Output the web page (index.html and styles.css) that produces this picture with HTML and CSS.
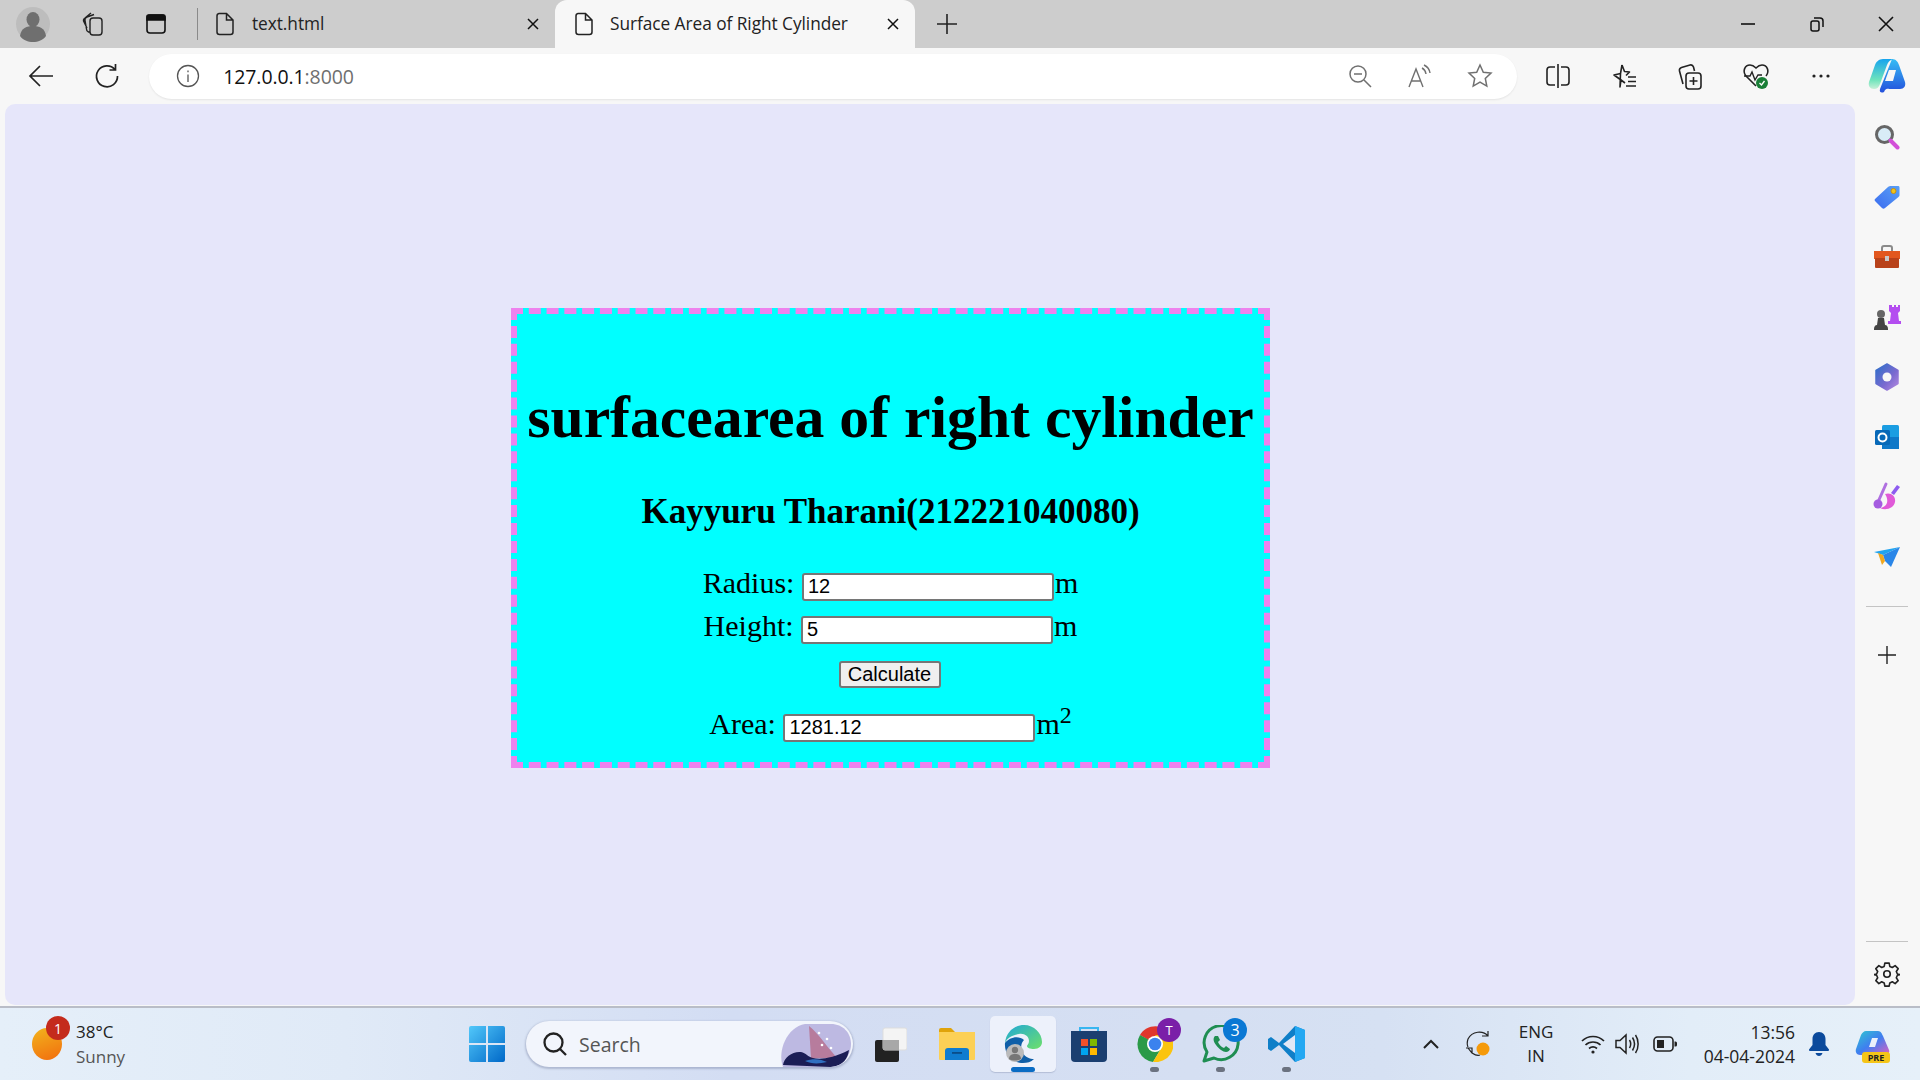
FILE: index.html
```html
<!DOCTYPE html>
<html lang="en">
<head>
    <meta charset="utf-8">
    <title>Surface Area of Right Cylinder</title>
    <link rel="stylesheet" href="styles.css">
</head>
<body>
<!-- tab strip -->
<div class="strip">
    <span class="s-avatar">
        <svg width="36" height="36" viewBox="0 0 36 36"><circle cx="18" cy="18" r="17" fill="#bdbdbd"/><ellipse cx="18" cy="13.5" rx="6.5" ry="7.5" fill="#6f6f6f"/><path d="M5 30c1-8 7-10 13-10s12 2 13 10c-3 4-8 6-13 6s-10-2-13-6z" fill="#6f6f6f"/></svg>
    </span>
    <span class="s-coll">
        <svg width="26" height="26" viewBox="0 0 26 26" fill="none" stroke="#222" stroke-width="1.4"><rect x="10" y="7" width="12" height="17" rx="3"/><path d="M10 21H8.500a3 3 0 0 1-2-3L5 9.500a3 3 0 0 1 2-3.500L14 3.500M7 17 4 11a3 3 0 0 1 1-4l6-5"/></svg>
    </span>
    <span class="s-tabs">
        <svg width="24" height="24" viewBox="0 0 24 24" fill="none" stroke="#111" stroke-width="1.6"><rect x="3" y="3" width="18" height="18" rx="3"/><path d="M3 4.500a1.500 1.500 0 0 1 1.500-1.500h15a1.500 1.500 0 0 1 1.500 1.500V8H3z" fill="#111"/></svg>
    </span>
    <div class="tab">
        <svg class="doc" width="20" height="24" viewBox="0 0 20 24" fill="none" stroke="#222" stroke-width="1.5"><path d="M4 1.500h7.500L18 8v12a2.500 2.500 0 0 1-2.500 2.500h-11A2.500 2.500 0 0 1 2 20V4a2.500 2.500 0 0 1 2-2.500zM11.500 1.500V8H18"/></svg>
        <span class="tab-title">text.html</span>
        <svg class="tab-x" width="12" height="12" viewBox="0 0 12 12" stroke="#111" stroke-width="1.5"><path d="M1 1l10 10M11 1L1 11"/></svg>
    </div>
    <div class="tab tab-on">
        <svg class="doc" width="20" height="24" viewBox="0 0 20 24" fill="none" stroke="#222" stroke-width="1.5"><path d="M4 1.500h7.500L18 8v12a2.500 2.500 0 0 1-2.500 2.500h-11A2.500 2.500 0 0 1 2 20V4a2.500 2.500 0 0 1 2-2.500zM11.500 1.500V8H18"/></svg>
        <span class="tab-title">Surface Area of Right Cylinder</span>
        <svg class="tab-x" width="12" height="12" viewBox="0 0 12 12" stroke="#111" stroke-width="1.5"><path d="M1 1l10 10M11 1L1 11"/></svg>
    </div>
    <span class="s-new">
        <svg width="22" height="22" viewBox="0 0 22 22" stroke="#222" stroke-width="1.6"><path d="M11 1v20M1 11h20"/></svg>
    </span>
    <span class="fill"></span>
    <span class="win">
        <svg width="14" height="14" viewBox="0 0 14 14" stroke="#111" stroke-width="1.6"><path d="M0 7h14"/></svg>
    </span>
    <span class="win">
        <svg width="16" height="16" viewBox="0 0 16 16" fill="none" stroke="#111" stroke-width="1.5"><rect x="2" y="5" width="8" height="10" rx="2"/><path d="M5 2h6a3 3 0 0 1 3 3v6"/></svg>
    </span>
    <span class="win">
        <svg width="16" height="16" viewBox="0 0 16 16" stroke="#111" stroke-width="1.6"><path d="M1 1l14 14M15 1L1 15"/></svg>
    </span>
</div>

<!-- address bar -->
<div class="toolbar">
    <span class="t-back">
        <svg width="26" height="24" viewBox="0 0 26 24" fill="none" stroke="#222" stroke-width="1.7"><path d="M25 12H2M12 2 2 12l10 10"/></svg>
    </span>
    <span class="t-reload">
        <svg width="26" height="26" viewBox="0 0 26 26" fill="none" stroke="#222" stroke-width="1.7"><path d="M21 6.500A10.500 10.500 0 1 0 23.500 13M21.500 1v6h-6"/></svg>
    </span>
    <div class="address">
        <svg class="info" width="24" height="24" viewBox="0 0 24 24" fill="none" stroke="#555" stroke-width="1.3"><circle cx="12" cy="12" r="10.500"/><path d="M12 10.500V18M12 6.500v1.800"/></svg>
        <span class="url">127.0.0.1<span class="url-port">:8000</span></span>
        <span class="fill"></span>
        <span class="a-icon">
            <svg width="24" height="24" viewBox="0 0 24 24" fill="none" stroke="#707070" stroke-width="1.5"><circle cx="10" cy="10" r="8"/><path d="M6 10h8M16 16l7 7"/></svg>
        </span>
        <span class="a-icon">
            <svg width="26" height="24" viewBox="0 0 26 24" fill="none" stroke="#707070" stroke-width="1.4"><path d="M2 23 9 5l7 18M4.500 17h9.500M15 4c2 1 3.500 3 4 6M17 1c3 1.500 5.500 4 6 8"/></svg>
        </span>
        <span class="a-icon">
            <svg width="26" height="26" viewBox="0 0 26 26" fill="none" stroke="#707070" stroke-width="1.5"><path d="M13 2l3.300 7.200 7.700.9-5.700 5.300 1.500 7.700-6.800-3.900-6.800 3.900 1.500-7.700L2 10.100l7.700-.9z"/></svg>
        </span>
    </div>
    <div class="t-right">
        <span class="t-slot">
            <svg width="24" height="26" viewBox="0 0 24 26" fill="none" stroke="#222" stroke-width="1.6"><path d="M12 1v24M9 4H4a3 3 0 0 0-3 3v12a3 3 0 0 0 3 3h5M15 4h5a3 3 0 0 1 3 3v12a3 3 0 0 1-3 3h-5"/></svg>
        </span>
        <span class="t-slot">
            <svg width="26" height="26" viewBox="0 0 26 26" fill="none" stroke="#222" stroke-width="1.6" stroke-linejoin="round"><path d="M11 2l2.500 6.500 5 .5-3.500 3.500M9 24l1-7-7-5 6.500-1.500zM11 2 9.500 10.500M10 17l4 3M17 14h8M17 18.500h8M15 23h10"/></svg>
        </span>
        <span class="t-slot">
            <svg width="26" height="28" viewBox="0 0 26 28" fill="none" stroke="#222" stroke-width="1.6"><rect x="9" y="11" width="15" height="16" rx="3"/><path d="M16.500 15v8M12.500 19h8M6 22 2.500 9a3 3 0 0 1 2-3.500L13 3a3 3 0 0 1 3.500 2l1 4"/></svg>
        </span>
        <span class="t-slot">
            <svg width="28" height="28" viewBox="0 0 28 28"><path d="M14 24 4 14C0 9 3 3 8 3c3 0 5 2 6 3 1-1 3-3 6-3 5 0 8 6 4 11" fill="none" stroke="#222" stroke-width="1.6"/><path d="M2 14h6l2-4 3 8 3-5h4" fill="none" stroke="#222" stroke-width="1.4"/><circle cx="20" cy="21" r="6" fill="#1a7f37"/><path d="M17.500 21l2 2 3-4" fill="none" stroke="#fff" stroke-width="1.300"/></svg>
        </span>
        <span class="t-slot">
            <svg width="20" height="4" viewBox="0 0 20 4" fill="#222"><circle cx="3" cy="2" r="1.600"/><circle cx="10" cy="2" r="1.600"/><circle cx="17" cy="2" r="1.600"/></svg>
        </span>
        <span class="t-slot">
            <svg width="38" height="36" viewBox="0 0 38 36"><defs><linearGradient id="cpa" x1="0" y1="0" x2="0" y2="1"><stop offset="0" stop-color="#16a4ee"/><stop offset=".7" stop-color="#6fe4bc"/><stop offset="1" stop-color="#c8f0d8"/></linearGradient><linearGradient id="cpb" x1="0" y1="0" x2="0" y2="1"><stop offset="0" stop-color="#35bdf5"/><stop offset="1" stop-color="#2450dc"/></linearGradient></defs><path d="M24 1c4 0 6 3 7 6l6 17c1 4-1 7-5 7h-8c-4 0-5-1-7 1l-1 2c-2 1-5 1-4-3z" fill="url(#cpb)"/><path d="M15 1h10c-3 1-5 3-6 6l-7 19c-1 3-3 5-6 5-4 0-6-3-5-7L7 7c1-3 4-6 8-6z" fill="url(#cpa)"/><path d="M21 12h7l-3 11h-8z" fill="#f7f7f7"/></svg>
        </span>
    </div>
</div>

<div class="main">
    <div class="page">
        <div class="card">
            <h1>surfacearea of right cylinder</h1>
            <h2>Kayyuru Tharani(212221040080)</h2>
            <form class="calc">
                <div class="row row-radius">Radius: <input class="num" type="text" value="12">m</div>
                <div class="row row-height">Height: <input class="num" type="text" value="5">m</div>
                <div class="row row-btn"><input class="calc-btn" type="button" value="Calculate"></div>
                <div class="row row-area">Area: <input class="num" type="text" value="1281.12">m<sup>2</sup></div>
            </form>
        </div>
    </div>

    <!-- edge sidebar -->
    <div class="sidebar">
        <span class="side-slot">
            <svg width="26" height="26" viewBox="0 0 26 26"><circle cx="10.500" cy="10.500" r="8" fill="#d9ecf7" stroke="#666" stroke-width="3"/><path d="M16.500 16.500l7 7" stroke="#d24fd8" stroke-width="4" stroke-linecap="round"/></svg>
        </span>
        <span class="side-slot">
            <svg width="26" height="26" viewBox="0 0 26 26"><defs><linearGradient id="sb1" x1="0" y1="1" x2="1" y2="0"><stop offset="0" stop-color="#3b6cf0"/><stop offset="1" stop-color="#5aa0f5"/></linearGradient></defs><path d="M1 15 14 3c1-1 2-1 3-1h7c1 0 1.500.5 1.500 1.500V11c0 1-.5 1.500-1 2L11 24c-1 1-2 1-3 0l-7-7c-.5-.5-.5-1.500 0-2z" fill="url(#sb1)"/><circle cx="19.500" cy="7" r="2.500" fill="#f0c419" stroke="#c88f10"/></svg>
        </span>
        <span class="side-slot">
            <svg width="28" height="24" viewBox="0 0 28 24"><path d="M9 6V3a2 2 0 0 1 2-2h6a2 2 0 0 1 2 2v3" fill="none" stroke="#8a8a8a" stroke-width="2"/><rect x="1" y="6" width="26" height="8" fill="#e2571e"/><rect x="2" y="13" width="24" height="10" rx="1" fill="#b8421a"/><rect x="12" y="11" width="4" height="5" fill="#c9c9c9"/></svg>
        </span>
        <span class="side-slot">
            <svg width="28" height="28" viewBox="0 0 28 28"><path d="M16 2h3v2h2V2h2v2h2V2h2v6l-2 2 1 8h2v3H15v-3h2l1-8-2-2z" fill="#b44df0"/><circle cx="8" cy="11" r="4" fill="#666"/><path d="M5 15h6l1 7H4zM1 26c0-2 1-4 3-4h8c2 0 3 2 3 4v1H1z" fill="#444"/></svg>
        </span>
        <span class="side-slot">
            <svg width="26" height="28" viewBox="0 0 26 28"><defs><linearGradient id="m3" x1="0" y1="0" x2="1" y2="1"><stop offset="0" stop-color="#2a6fc9"/><stop offset=".6" stop-color="#7b6ad0"/><stop offset="1" stop-color="#b58ae0"/></linearGradient></defs><path d="M13 1l11 6.500v13L13 27 2 20.500v-13z" fill="url(#m3)" stroke="url(#m3)" stroke-width="1.500" stroke-linejoin="round"/><circle cx="13" cy="14" r="4.500" fill="#f7f7f7"/></svg>
        </span>
        <span class="side-slot">
            <svg width="26" height="26" viewBox="0 0 26 26"><rect x="8" y="1" width="17" height="24" rx="1.500" fill="#1b9de2"/><path d="M8 13h17v12H8z" fill="#0f78c8"/><rect x="1" y="6" width="15" height="15" rx="1.500" fill="#0769b8"/><circle cx="8.500" cy="13.500" r="4" fill="none" stroke="#fff" stroke-width="2"/></svg>
        </span>
        <span class="side-slot">
            <svg width="28" height="30" viewBox="0 0 28 30"><path d="M12 12c6-2 11 2 10 8-1 6-9 9-15 6 6-1 10-6 5-14z" fill="#e05ad8"/><path d="M13 2 5 20" stroke="#b070e0" stroke-width="3" stroke-linecap="round"/><circle cx="5" cy="22" r="4.500" fill="#a55ce0"/><path d="M18 11l6-8 3 2-6 8z" fill="#8d5cf0"/></svg>
        </span>
        <span class="side-slot">
            <svg width="28" height="22" viewBox="0 0 28 22"><path d="M1 6 27 1 10 9z" fill="#20a4f0"/><path d="M10 9 27 1l-9 20-6-6z" fill="#2a86e8"/><path d="M5 7l5 2 2 6-3 4z" fill="#f0a820"/></svg>
        </span>
        <span class="side-line side-line-top"></span>
        <span class="side-slot">
            <svg width="20" height="20" viewBox="0 0 20 20" stroke="#222" stroke-width="1.400"><path d="M10 1v18M1 10h18"/></svg>
        </span>
        <span class="fill"></span>
        <span class="side-line"></span>
        <span class="side-gear">
            <svg width="26" height="26" viewBox="0 0 24 24" fill="none" stroke="#222" stroke-width="1.500" stroke-linejoin="round"><circle cx="12" cy="12" r="3"/><path d="M10 2h4l.6 3 2.300 1 2.600-1.700 2.800 2.800-1.700 2.600 1 2.300 3 .6v0l-3 .6-1 2.300 1.700 2.600-2.800 2.800-2.600-1.700-2.300 1-.6 3h-4l-.6-3-2.300-1-2.600 1.700-2.800-2.800 1.700-2.600-1-2.300-3-.6v-0l3-.6 1-2.300-1.700-2.600 2.800-2.800 2.600 1.700 2.300-1z"/></svg>
        </span>
    </div>
</div>

<!-- windows taskbar -->
<div class="taskbar">
    <div class="weather">
        <span class="sun"><span class="sun-badge">1</span></span>
        <div class="weather-text">
            <div class="temp">38°C</div>
            <div class="sky">Sunny</div>
        </div>
    </div>
    <span class="tb-start">
        <svg width="36" height="36" viewBox="0 0 36 36"><defs><linearGradient id="wn" x1="0" y1="0" x2="1" y2="1"><stop offset="0" stop-color="#52c8fa"/><stop offset="1" stop-color="#0068c8"/></linearGradient></defs><path d="M0 2a2 2 0 0 1 2-2h15v17H0zM19 0h15a2 2 0 0 1 2 2v15H19zM0 19h17v17H2a2 2 0 0 1-2-2zM19 19h17v15a2 2 0 0 1-2 2H19z" fill="url(#wn)"/></svg>
    </span>
    <div class="search">
        <svg width="26" height="26" viewBox="0 0 26 26" fill="none" stroke="#222" stroke-width="2.300"><circle cx="11.500" cy="11.500" r="9"/><path d="M18 18l6 6"/></svg>
        <span class="search-text">Search</span>
        <svg class="search-art" width="78" height="46" viewBox="0 0 78 46"><path d="M30 3h26c12 0 20 9 20 20s-8 23-20 23H8C2 30 12 6 30 3z" fill="#bdb9e2"/><path d="M34 5c10 8 14 16 28 32H36z" fill="#b45a78" opacity=".65"/><path d="M8 44c1-8 10-14 18-13 5 1 7 5 12 6 8 2 20 0 36-8-1 8-6 16-18 17z" fill="#1b1d55"/><path d="M30 40c8-3 16-2 22 1-8 2-16 2-22-1z" fill="#2f6fc0"/><circle cx="44" cy="12" r="1.300" fill="#fff"/><circle cx="52" cy="18" r="1.300" fill="#fff"/><circle cx="47" cy="24" r="1.300" fill="#fff"/><circle cx="56" cy="27" r="1.300" fill="#fff"/></svg>
    </div>
    <div class="apps">
        <span class="app">
            <svg width="32" height="36" viewBox="0 0 32 36"><rect x="0" y="14" width="24" height="22" rx="2" fill="#222"/><rect x="8" y="2" width="24" height="22" rx="2" fill="#f4f4f4" stroke="#ddd"/><rect x="8" y="14" width="16" height="10" fill="#a8a8a8"/></svg>
        </span>
        <span class="app">
            <svg width="36" height="34" viewBox="0 0 36 34"><path d="M0 3a2 2 0 0 1 2-2h10l4 4H0z" fill="#e0a30a"/><path d="M0 5h36v27a1 1 0 0 1-1 1H1a1 1 0 0 1-1-1z" fill="#fcd056"/><path d="M6 33v-9a3 3 0 0 1 3-3h18a3 3 0 0 1 3 3v9z" fill="#0f7ccf"/><rect x="13" y="25" width="10" height="1.800" fill="#0a4d88"/></svg>
        </span>
        <span class="app app-on">
            <svg width="38" height="38" viewBox="0 0 38 38"><defs><linearGradient id="eg" x1="0" y1="0" x2="1" y2="1"><stop offset="0" stop-color="#1fa8d8"/><stop offset="1" stop-color="#6ee06a"/></linearGradient></defs><path d="M1 18C2 7 10 0 20 0c10 0 18 8 18 17 0 4-3 7-8 7-4 0-7-1-7-3 0-1 2-2 2-5 0-5-5-8-10-7C8 10 3 13 1 18z" fill="url(#eg)"/><path d="M1 18c4-6 14-8 19-3 -3 3-4 8-1 13 2 4 7 6 11 6-3 3-7 4-11 4C8 38 0 29 1 18z" fill="#0f5fa8"/><circle cx="11" cy="28" r="9" fill="#bbb"/><circle cx="11" cy="25" r="3.200" fill="#777"/><path d="M5 34c0-4 3-5 6-5s6 1 6 5c-3 2-9 2-12 0z" fill="#777"/></svg>
        </span>
        <span class="app">
            <svg width="36" height="36" viewBox="0 0 36 36"><path d="M9 7V2h18v5" fill="none" stroke="#38b6f0" stroke-width="2"/><path d="M0 5h36v27a4 4 0 0 1-4 4H4a4 4 0 0 1-4-4z" fill="#1b3f70"/><rect x="10" y="13" width="7" height="7" fill="#f0502a"/><rect x="19" y="13" width="7" height="7" fill="#80b800"/><rect x="10" y="22" width="7" height="7" fill="#00a4ef"/><rect x="19" y="22" width="7" height="7" fill="#ffb800"/></svg>
        </span>
        <span class="app">
            <svg width="36" height="36" viewBox="0 0 36 36"><path d="M18 18 34 9a18 18 0 0 0-31 0z" fill="#e0362c"/><path d="M3 9a18 18 0 0 0 13 27l9-15z" fill="#2a9a48"/><path d="M34 9H18l7 12-9 15A18 18 0 0 0 34 9z" fill="#fbc40e"/><circle cx="18" cy="18" r="8" fill="#fff"/><circle cx="18" cy="18" r="6.300" fill="#3b82ee"/></svg>
            <span class="app-badge app-badge-t">T</span>
            <i class="app-dot"></i>
        </span>
        <span class="app">
            <svg width="38" height="38" viewBox="0 0 38 38" fill="none"><path d="M2 36l3-9A17 17 0 1 1 12 33z" stroke="#1f8e52" stroke-width="3" stroke-linejoin="round"/><path d="M13 11c-2 2-2 5 1 9s7 7 10 7c2 0 4-2 4-3l-4-3-2 2c-3-1-5-4-6-6l2-2-2-4z" fill="#1f8e52"/></svg>
            <span class="app-badge app-badge-n">3</span>
            <i class="app-dot"></i>
        </span>
        <span class="app">
            <svg width="38" height="38" viewBox="0 0 38 38"><path d="M27 1 11 18 3 12 0 14v10l3 2 8-6 16 17 10-4V5z" fill="#0f7fc8"/><path d="M27 1l10 4v28l-10 4z" fill="#24a8f2"/><path d="M27 10 15 19l12 9z" fill="#e1e8f6"/></svg>
            <i class="app-dot"></i>
        </span>
    </div>
    <span class="fill"></span>
    <div class="tray">
        <span class="tr-chev">
            <svg width="18" height="12" viewBox="0 0 18 12" fill="none" stroke="#222" stroke-width="2"><path d="M2 10l7-7 7 7"/></svg>
        </span>
        <span class="tr-sync">
            <svg width="28" height="28" viewBox="0 0 28 28" fill="none" stroke="#222" stroke-width="1.200"><path d="M23 6C18 0 7 1 3 9c-1 3-1 6 0 8M23 1v5h-6M1 18h6v5M3 18l4 5c3 2 6 3 8 2"/><circle cx="18" cy="19" r="6.500" fill="#f59a0a" stroke="none"/></svg>
        </span>
        <div class="tr-lang">ENG<br>IN</div>
        <span class="tr-wifi">
            <svg width="24" height="20" viewBox="0 0 24 20" fill="none" stroke="#222" stroke-width="1.700"><path d="M1 7c6-6 16-6 22 0M4.500 11c4-4 11-4 15 0M8 14.500c2.500-2 5.500-2 8 0"/><circle cx="12" cy="18" r="1.600" fill="#222" stroke="none"/></svg>
        </span>
        <span class="tr-vol">
            <svg width="24" height="22" viewBox="0 0 24 22" fill="none" stroke="#222" stroke-width="1.500"><path d="M1 7.500h4L11 2v18l-6-5.500H1zM14.500 7c1.500 2.500 1.500 5.500 0 8M17.500 4.500c2.500 4 2.500 9 0 13M20.500 2c3.500 5 3.500 13 0 18"/></svg>
        </span>
        <span class="tr-batt">
            <svg width="24" height="16" viewBox="0 0 24 16"><rect x="1" y="1" width="19" height="14" rx="3.500" fill="none" stroke="#222" stroke-width="1.600"/><rect x="4" y="4" width="7" height="8" fill="#222"/><path d="M21.500 5.500h1a1.500 1.500 0 0 1 1.500 1.500v2a1.500 1.500 0 0 1-1.500 1.500h-1z" fill="#222"/></svg>
        </span>
        <div class="clock">13:56<br>04-04-2024</div>
        <span class="tr-bell">
            <svg width="20" height="24" viewBox="0 0 20 24" fill="#0b4a9c"><path d="M10 0c4 0 6.500 3 6.500 7v6l3.500 4.500c0 1-.5 1.500-1 1.500H1c-.5 0-1-.5-1-1.500L3.500 13V7c0-4 2.500-7 6.500-7zM6.500 21h7c-.5 2-2 3-3.500 3s-3-1-3.500-3z"/></svg>
        </span>
        <span class="tr-pre">
            <svg width="36" height="28" viewBox="0 0 36 28"><defs><linearGradient id="pr" x1="0" y1="0" x2="1" y2="1"><stop offset="0" stop-color="#2ec8d0"/><stop offset=".5" stop-color="#3f7ef0"/><stop offset="1" stop-color="#e060c0"/></linearGradient></defs><path d="M11 1h12c3 0 4 3 5 5l6 14c1 3-1 5-4 5H5c-3 0-5-3-4-6L6 5c1-2 3-4 5-4z" fill="url(#pr)"/><path d="M17 8h6l-3 9h-6z" fill="#eaf1fa"/></svg>
            <span class="pre-tag">PRE</span>
        </span>
    </div>
</div>
</body>
</html>
```

FILE: styles.css
```css
* {
    box-sizing: border-box;
}

html, body {
    margin: 0;
    height: 100%;
    overflow: hidden;
}

body {
    width: 1920px;
    height: 1080px;
    font-family: "Open Sans", "Noto Sans", sans-serif;
    background-color: #f7f7f7;
}

.fill {
    flex: 1;
}

/* tab strip */
.strip {
    display: flex;
    align-items: center;
    height: 48px;
    background-color: #cdcdcd;
}

.strip span {
    display: flex;
    align-items: center;
    justify-content: center;
}

.s-avatar {
    width: 66px;
}

.s-coll {
    width: 54px;
}

.s-tabs {
    width: 72px;
}

.tab {
    display: flex;
    align-items: center;
    width: 363px;
    height: 48px;
    padding-left: 23px;
    position: relative;
}

.tab::before {
    content: "";
    width: 1px;
    height: 32px;
    background-color: #8a8a8a;
    position: absolute;
    left: 5px;
    top: 8px;
}

.tab-title {
    margin-left: 17px;
    padding-bottom: 2px;
    font-size: 17.3px;
    letter-spacing: -.05px;
    color: #222;
    white-space: nowrap;
}

.tab-x {
    margin-left: auto;
    margin-right: 16px;
}

.tab-on {
    width: 360px;
    padding-left: 19px;
    background-color: #f7f7f7;
    border-radius: 12px 12px 0 0;
}

.tab-on::before {
    display: none;
}

.tab-on .tab-title {
    margin-left: 16px;
}

.s-new {
    width: 64px;
}

.win {
    width: 69px;
}

/* address bar */
.toolbar {
    display: flex;
    align-items: center;
    height: 56px;
}

.toolbar span {
    display: flex;
    align-items: center;
    justify-content: center;
}

.t-back {
    width: 82px;
}

.t-reload {
    width: 52px;
}

.address {
    display: flex;
    align-items: center;
    flex: none;
    width: 1368px;
    height: 45px;
    margin-left: 16px;
    padding-left: 27px;
    background-color: #fff;
    border-radius: 23px;
    box-shadow: 0 1px 2px rgba(0, 0, 0, .08);
}

.url {
    margin-left: 23px;
    font-size: 19.5px;
    letter-spacing: -.1px;
    color: #111;
}

.toolbar .url {
    display: block;
}

.url-port {
    color: #6f6f6f;
}

.toolbar .url-port {
    display: inline;
}

.a-icon {
    width: 60px;
}

.address .a-icon:last-child {
    margin-right: 7px;
}

.t-right {
    display: flex;
    margin-left: 8px;
}

.t-slot {
    width: 65.8px;
}

/* page area */
.main {
    display: flex;
    height: 904px;
    border-bottom: 2px solid #b9bdc7;
}

.page {
    width: 1850px;
    height: 901px;
    margin-left: 5px;
    padding: 204px 0 0 506px;
    background-color: #e6e6fa;
    border-radius: 10px;
}

.card {
    width: 759px;
    height: 460px;
    padding-top: 69px;
    text-align: center;
    background-color: aqua;
    border: 6px dashed violet;
    font-family: "Liberation Serif", serif;
    color: #000;
}

.card h1 {
    margin: 0;
    font-size: 59.7px;
    line-height: 68px;
}

.card h2 {
    margin: 41px 0 0;
    font-size: 35px;
    line-height: 40px;
}

.calc {
    margin-top: 37px;
}

.row {
    height: 28px;
    font-size: 30px;
    line-height: 28px;
    white-space: nowrap;
}

.row-height {
    margin-top: 15px;
}

.row-btn {
    margin-top: 21px;
}

.row-area {
    margin-top: 21px;
}

.num {
    width: 252px;
    height: 28px;
    margin: 0 1px 0 0;
    padding: 1px 3px 1px 4px;
    vertical-align: 0;
    font-family: "Liberation Sans", sans-serif;
    font-size: 20px;
    color: #000;
    background-color: #fff;
    border: 2px solid #767676;
    border-radius: 3px;
}

.calc-btn {
    width: 102px;
    height: 27px;
    margin: 0 0 0 -2px;
    padding: 0;
    vertical-align: top;
    font-family: "Liberation Sans", sans-serif;
    font-size: 20px;
    color: #000;
    background-color: #efefef;
    border: 2px solid #767676;
    border-radius: 3px;
}

sup {
    font-size: 24px;
    line-height: 0;
}

/* edge sidebar */
.sidebar {
    display: flex;
    flex-direction: column;
    align-items: center;
    width: 64px;
    height: 902px;
    padding-top: 3px;
}

.side-slot {
    display: flex;
    align-items: center;
    justify-content: center;
    flex: none;
    width: 100%;
    height: 60px;
}

.side-line {
    flex: none;
    width: 42px;
    height: 1px;
    background-color: #c4c4c4;
}

.side-line-top {
    margin: 19px 0 18px;
}

.side-gear {
    display: flex;
    align-items: center;
    justify-content: center;
    flex: none;
    height: 64px;
}

/* windows taskbar */
.taskbar {
    display: flex;
    align-items: center;
    height: 72px;
    background: linear-gradient(90deg, #e5eff9 0%, #e0eaf7 18%, #d3ddf3 38%, #d5dff2 62%, #d6e1f3 72%, #e2edf8 88%, #e6f0f9 100%);
    color: #222;
}

.taskbar span {
    display: flex;
    align-items: center;
    justify-content: center;
    flex: none;
}

.taskbar .fill {
    flex: 1;
}

.weather {
    display: flex;
    align-items: center;
    width: 459px;
    padding-left: 32px;
}

.taskbar .sun {
    width: 30px;
    height: 32px;
    border-radius: 50%;
    background: linear-gradient(160deg, #f2b41d, #f26d0e);
    position: relative;
}

.taskbar .sun-badge {
    width: 24px;
    height: 24px;
    border-radius: 50%;
    background-color: #c42b1c;
    color: #fff;
    font-size: 14px;
    position: absolute;
    left: 14px;
    top: -12px;
}

.weather-text {
    margin-left: 14px;
    font-size: 17px;
    line-height: 25px;
}

.sky {
    color: #555;
}

.tb-start {
    width: 56px;
}

.search {
    display: flex;
    align-items: center;
    width: 327px;
    height: 46px;
    margin-left: 11px;
    padding-left: 16px;
    background-color: #f2f5fc;
    border-radius: 23px;
    box-shadow: 0 1px 2px 1px rgba(80, 90, 130, .3);
}

.taskbar .search-text {
    margin-left: 11px;
    font-size: 19.5px;
    color: #555;
}

.search-art {
    margin-left: auto;
    border-radius: 0 23px 23px 0;
}

.apps {
    display: flex;
    margin-left: 5px;
}

.taskbar .app {
    width: 66px;
    height: 56px;
    position: relative;
}

.taskbar .app-on {
    background-color: #edf1fb;
    border-radius: 5px;
    box-shadow: 0 1px 1px rgba(80, 90, 130, .25);
}

.app-on::after {
    content: "";
    width: 24px;
    height: 5px;
    border-radius: 3px;
    background-color: #0a6cc4;
    position: absolute;
    left: 21px;
    bottom: 0;
}

.app-dot {
    width: 9px;
    height: 5px;
    border-radius: 3px;
    background-color: #6b7280;
    position: absolute;
    left: 28px;
    bottom: 0;
}

.taskbar .app-badge {
    width: 24px;
    height: 24px;
    border-radius: 50%;
    color: #fff;
    font-size: 16px;
    position: absolute;
    left: 35px;
    top: 2px;
}

.taskbar .app-badge-t {
    background-color: #7a1fa8;
    font-size: 13px;
}

.taskbar .app-badge-n {
    background-color: #0a78d4;
}

.tray {
    display: flex;
    align-items: center;
    margin-right: 24px;
}

.tr-chev {
    width: 46px;
}

.tr-sync {
    width: 50px;
}

.tr-lang {
    width: 64px;
    font-size: 17px;
    line-height: 24px;
    text-align: center;
}

.tr-wifi {
    width: 34px;
    margin-left: 8px;
}

.tr-vol {
    width: 34px;
}

.tr-batt {
    width: 34px;
    margin-left: 4px;
}

.clock {
    width: 113px;
    font-size: 17.5px;
    line-height: 24px;
    text-align: right;
}

.tr-bell {
    width: 38px;
    margin-left: 5px;
}

.taskbar .tr-pre {
    width: 46px;
    margin-left: 12px;
    position: relative;
}

.taskbar .pre-tag {
    width: 28px;
    height: 11px;
    border-radius: 3px;
    background-color: #f5c518;
    color: #222;
    font-size: 9px;
    font-weight: 700;
    position: absolute;
    left: 12px;
    bottom: -5px;
}
```
